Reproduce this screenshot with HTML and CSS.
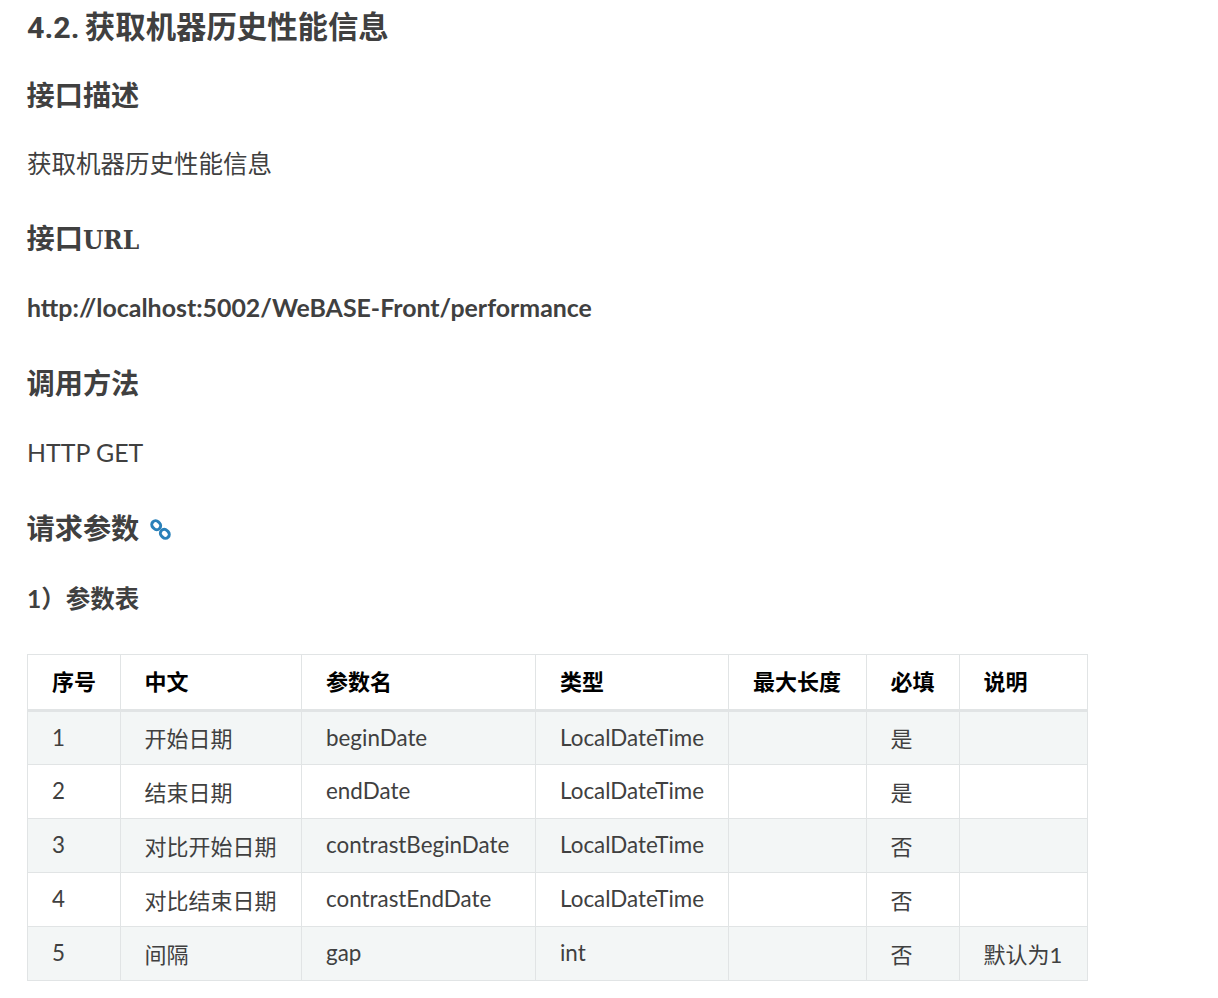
FILE: index.html
```html
<!DOCTYPE html>
<html lang="zh">
<head>
<meta charset="utf-8">
<title>获取机器历史性能信息</title>
<link rel="stylesheet" href="styles.css">
</head>
<body>
<h2 class="title">4.2. 获取机器历史性能信息</h2>
<h3 class="head head-first">接口描述</h3>
<p class="para">获取机器历史性能信息</p>
<h3 class="head head-url">接口<span class="slab">URL</span></h3>
<p class="para lat"><strong>http://localhost:5002/WeBASE-Front/performance</strong></p>
<h3 class="head">调用方法</h3>
<p class="para lat">HTTP GET</p>
<h3 class="head">请求参数<a class="anchor" href="#"><svg class="chain" viewBox="0 0 20 20" width="21" height="21" fill="none" stroke="#2980b9" stroke-width="2.8"><rect x="1.4" y="2.2" width="9" height="7.4" rx="3.7" transform="rotate(45 5.9 5.9)"/><rect x="9.6" y="10.4" width="9" height="7.4" rx="3.7" transform="rotate(45 14.1 14.1)"/></svg></a></h3>
<p class="para para-sub"><strong>1）参数表</strong></p>
<table class="params">
<colgroup><col class="c1"><col class="c2"><col class="c3"><col class="c4"><col class="c5"><col class="c6"><col class="c7"></colgroup>
<thead><tr><th>序号</th><th>中文</th><th>参数名</th><th>类型</th><th>最大长度</th><th>必填</th><th>说明</th></tr></thead>
<tbody>
<tr><td class="lat">1</td><td>开始日期</td><td class="lat">beginDate</td><td class="lat">LocalDateTime</td><td></td><td>是</td><td></td></tr>
<tr><td class="lat">2</td><td>结束日期</td><td class="lat">endDate</td><td class="lat">LocalDateTime</td><td></td><td>是</td><td></td></tr>
<tr><td class="lat">3</td><td>对比开始日期</td><td class="lat">contrastBeginDate</td><td class="lat">LocalDateTime</td><td></td><td>否</td><td></td></tr>
<tr><td class="lat">4</td><td>对比结束日期</td><td class="lat">contrastEndDate</td><td class="lat">LocalDateTime</td><td></td><td>否</td><td></td></tr>
<tr><td class="lat">5</td><td>间隔</td><td class="lat">gap</td><td class="lat">int</td><td></td><td>否</td><td>默认为1</td></tr>
</tbody>
</table>
</body>
</html>
```
FILE: styles.css
```css
html, body { margin: 0; padding: 0; background: #fff; }
body { padding: 0 27px; height: 998px; overflow: hidden; box-sizing: border-box; color: #404040; font-family: Lato, "Noto Sans CJK SC", sans-serif; font-size: 24.5px; }
.title, .head { font-family: Roboto, "Noto Sans CJK SC", sans-serif; font-weight: 700; margin: 0; }
.title { font-size: 30.4px; line-height: 36px; margin-top: 10px; word-spacing: -2.2px; }
.head { font-size: 28.2px; line-height: 34px; margin-top: 43px; margin-left: -0.5px; }
.head-first { margin-top: 34px; }
.head-url { margin-top: 41px; }
.slab { font-family: "DejaVu Serif Condensed", "DejaVu Serif", serif; font-size: 26px; line-height: 0; }
.para { margin: 0; line-height: 36px; margin-top: 32px; }
.para.lat { font-size: 24.9px; }
.para-sub { margin-top: 34px; }
.anchor { margin-left: 11px; display: inline-block; line-height: 0; }
.chain { vertical-align: -1px; display: inline-block; }
.params { border-collapse: collapse; table-layout: fixed; width: 1060px; margin-top: 37px; font-size: 22px; }
.c1 { width: 93px; } .c2 { width: 181px; } .c3 { width: 234px; } .c4 { width: 193px; } .c5 { width: 138px; } .c6 { width: 93px; } .c7 { width: 128px; }
th, td { border: 1px solid #e1e4e5; padding: 0 24px 2px; text-align: left; height: 54px; box-sizing: border-box; white-space: nowrap; }
td.lat { font-size: 22.4px; }
th { color: #000; font-weight: 700; border-bottom-width: 3px; height: 56px; padding-bottom: 4px; }
th:nth-child(2), td:nth-child(2), th:nth-child(6), td:nth-child(6), th:nth-child(7), td:nth-child(7) { padding-left: 23.4px; }
tbody tr:nth-child(odd) td { background: #f3f6f6; }
```
